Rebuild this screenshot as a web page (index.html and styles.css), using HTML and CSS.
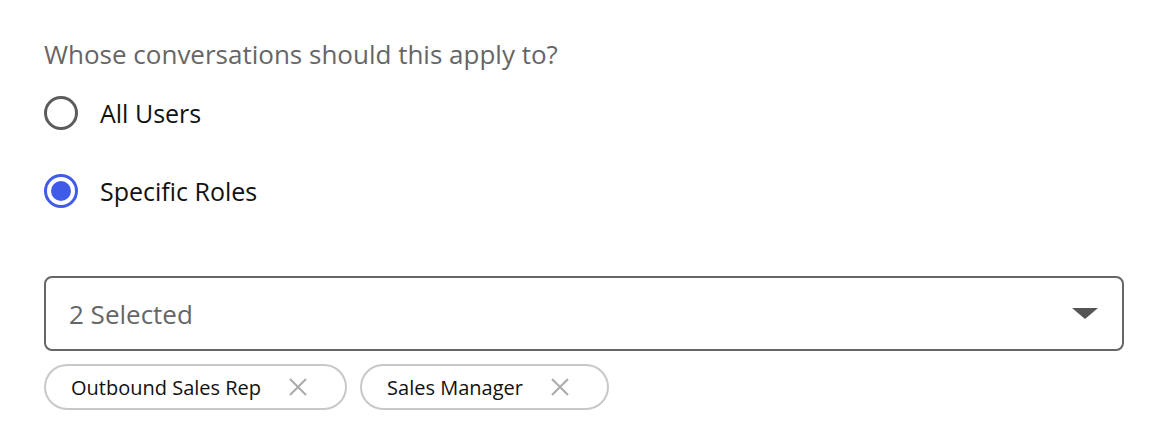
FILE: index.html
```html
<!DOCTYPE html>
<html lang="en">
<head>
  <meta charset="UTF-8">
  <meta name="viewport" content="width=device-width, initial-scale=1.0">
  <title>Role Filter</title>
  <link rel="stylesheet" href="styles.css">
</head>
<body>
  <div class="container">
    <p class="question">Whose conversations should this apply to?</p>
    <label class="radio">
      <span class="radio-circle"></span>
      <span class="radio-label">All Users</span>
    </label>
    <label class="radio checked">
      <span class="radio-circle"></span>
      <span class="radio-label">Specific Roles</span>
    </label>

    <div class="select">
      <span class="select-value">2 Selected</span>
      <span class="caret"></span>
    </div>
    <div class="chips">
      <div class="chip">
        <span>Outbound Sales Rep</span>
        <svg class="chip-x" width="18" height="18" viewBox="0 0 18 18"><path d="M1 1 L17 17 M17 1 L1 17" stroke="#aaa" stroke-width="2" fill="none"/></svg>
      </div>
      <div class="chip">
        <span>Sales Manager</span>
        <svg class="chip-x" width="18" height="18" viewBox="0 0 18 18"><path d="M1 1 L17 17 M17 1 L1 17" stroke="#aaa" stroke-width="2" fill="none"/></svg>
      </div>
    </div>
  </div>
</body>
</html>
```

FILE: styles.css
```css
body {
  margin: 0;
  font-family: "Open Sans", sans-serif;
  background: #fff;
  color: #111;
}
.container {
  padding: 34px 44px 0 44px;
}
.question {
  margin: 0;
  font-size: 26px;
  line-height: 40px;
  color: #666;
}
.radio {
  display: flex;
  align-items: center;
  gap: 22px;
  height: 46px;
  margin-top: 16px;
}
.radio + .radio {
  margin-top: 32px;
}
.radio-circle {
  box-sizing: border-box;
  width: 34px;
  height: 34px;
  border: 3px solid #5c5c5c;
  border-radius: 50%;
  display: flex;
  align-items: center;
  justify-content: center;
}
.radio.checked .radio-circle {
  border-color: #3f5be8;
}
.radio.checked .radio-circle::after {
  content: "";
  width: 20px;
  height: 20px;
  border-radius: 50%;
  background: #3f5be8;
}
.radio-label {
  font-size: 25px;
  color: #111;
}
.select {
  box-sizing: border-box;
  margin-top: 62px;
  height: 75px;
  border: 2px solid #666;
  border-radius: 8px;
  display: flex;
  align-items: center;
  justify-content: space-between;
  padding: 0 24px 0 23px;
}
.select-value {
  font-size: 26px;
  color: #666;
}
.caret {
  width: 0;
  height: 0;
  border-left: 13px solid transparent;
  border-right: 13px solid transparent;
  border-top: 11px solid #555;
}
.chips {
  display: flex;
  gap: 13px;
  margin-top: 13px;
}
.chip {
  box-sizing: border-box;
  height: 46px;
  border: 2px solid #c8c8c8;
  border-radius: 23px;
  display: flex;
  align-items: center;
  gap: 28px;
  padding: 0 38px 0 25px;
  font-size: 20px;
  color: #111;
}
.chip-x {
  display: block;
}
```
